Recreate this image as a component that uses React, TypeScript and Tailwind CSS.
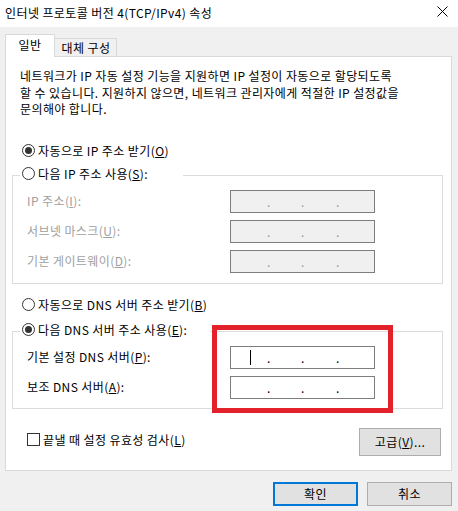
import type { ReactNode } from "react";

function Radio({ checked }: { checked?: boolean }) {
  return (
    <span className="flex h-[13px] w-[13px] shrink-0 items-center justify-center rounded-full border border-[#333] bg-white">
      {checked && <span className="h-[7px] w-[7px] rounded-full bg-[#333]" />}
    </span>
  );
}

function IpBox({ disabled, cursor }: { disabled?: boolean; cursor?: boolean }) {
  const dot = (
    <span className={`w-[3px] text-center leading-[21px] tracking-normal ${disabled ? "text-[#9a9a9a]" : "text-black"}`}>
      .
    </span>
  );
  return (
    <div
      className={`flex h-[23px] w-[145px] border border-[#7d7d7d] ${
        disabled ? "bg-[#f0f0f0]" : "bg-white"
      }`}
    >
      <span className="flex w-[36px] items-center">
        {cursor && <span className="ml-[19px] h-[15px] w-px bg-black" />}
      </span>
      {dot}
      <span className="w-[31px]" />
      {dot}
      <span className="w-[32px]" />
      {dot}
    </div>
  );
}

function FieldRow({
  label,
  disabled,
  cursor,
}: {
  label: ReactNode;
  disabled?: boolean;
  cursor?: boolean;
}) {
  return (
    <div className="flex h-[23px] items-center pl-[14px]">
      <span className={`w-[203px] ${disabled ? "text-[#a0a0a0]" : "text-black"}`}>{label}</span>
      <IpBox disabled={disabled} cursor={cursor} />
    </div>
  );
}

function Button({ children, primary, className = "" }: { children: ReactNode; primary?: boolean; className?: string }) {
  return (
    <div
      className={`flex items-center justify-center bg-[#e1e1e1] ${
        primary ? "border-2 border-[#0078d7]" : "border border-[#adadad]"
      } ${className}`}
    >
      {children}
    </div>
  );
}

export default function App() {
  return (
    <div className="relative h-[511px] w-[458px] overflow-hidden bg-[#f0f0f0] font-['Noto_Sans_CJK_KR',sans-serif] text-[12px] tracking-[0.4px] text-black">
      {/* title bar */}
      <div className="flex h-[27px] items-center justify-between bg-white pl-[5px] pr-[10px]">
        <span className="-mt-[2px]">인터넷 프로토콜 버전 4(TCP/IPv4) 속성</span>
        <svg width="11" height="11" viewBox="0 0 11 11" className="-mt-[4px]">
          <path d="M0.5 0.5 L10.5 10.5 M10.5 0.5 L0.5 10.5" stroke="#000" strokeWidth="1" />
        </svg>
      </div>

      {/* tabs */}
      <div className="mt-[7px] flex items-start pl-[5px]">
        <div className="relative z-10 -mb-px flex h-[23px] w-[50px] justify-center border-x border-t border-[#d9d9d9] bg-white pt-[1px]">
          일반
        </div>
        <div className="mt-[4px] flex h-[18px] w-[62px] items-center justify-center border-r border-t border-[#d9d9d9] pl-[1px]">
          대체 구성
        </div>
      </div>

      {/* panel */}
      <div className="relative ml-[5px] w-[447px] border border-[#d9d9d9] bg-white pb-[14px]">
        <p className="whitespace-nowrap pl-[14px] pt-[11px] leading-[16.5px]">
          네트워크가 IP 자동 설정 기능을 지원하면 IP 설정이 자동으로 할당되도록
          <br />할 수 있습니다. 지원하지 않으면, 네트워크 관리자에게 적절한 IP 설정값을
          <br />문의해야 합니다.
        </p>

        <div className="ml-[16px] mt-[23px] flex h-[20px] items-center gap-[3px]">
          <Radio checked />
          <span>
            자동으로 IP 주소 받기(<u>O</u>)
          </span>
        </div>

        <div className="ml-[6px] mt-[14px] w-[431px] border border-[#dcdcdc] pb-[10px]">
          <div className="-mt-[12px] ml-[7px] flex h-[20px] w-[163px] items-center gap-[3px] bg-white pl-[2px]">
            <Radio />
            <span>
              다음 IP 주소 사용(<u>S</u>):
            </span>
          </div>
          <div className="mt-[6px] flex flex-col gap-[7px]">
            <FieldRow
              disabled
              label={
                <>
                  IP 주소(<u>I</u>):
                </>
              }
            />
            <FieldRow
              disabled
              label={
                <>
                  서브넷 마스크(<u>U</u>):
                </>
              }
            />
            <FieldRow
              disabled
              label={
                <>
                  기본 게이트웨이(<u>D</u>):
                </>
              }
            />
          </div>
        </div>

        <div className="ml-[16px] mt-[11px] flex h-[20px] items-center gap-[3px]">
          <Radio />
          <span>
            자동으로 DNS 서버 주소 받기(<u>B</u>)
          </span>
        </div>

        <div className="ml-[6px] mt-[16px] w-[431px] border border-[#dcdcdc] pb-[9px]">
          <div className="-mt-[12px] ml-[7px] flex h-[20px] w-[190px] items-center gap-[3px] bg-white pl-[2px]">
            <Radio checked />
            <span>
              다음 DNS 서버 주소 사용(<u>E</u>):
            </span>
          </div>
          <div className="mt-[6px] flex flex-col gap-[7px]">
            <FieldRow
              cursor
              label={
                <>
                  기본 설정 DNS 서버(<u>P</u>):
                </>
              }
            />
            <FieldRow
              label={
                <>
                  보조 DNS 서버(<u>A</u>):
                </>
              }
            />
          </div>
        </div>

        <div className="mt-[19px] flex items-start justify-between pl-[21px] pr-[10px]">
          <div className="mt-[3px] flex items-center gap-[3px]">
            <span className="h-[13px] w-[13px] border border-[#333] bg-white" />
            <span>
              끝낼 때 설정 유효성 검사(<u>L</u>)
            </span>
          </div>
          <Button className="h-[28px] w-[82px]">
            고급(<u>V</u>)...
          </Button>
        </div>

        {/* annotation overlay */}
        <div className="absolute left-[206px] top-[268px] h-[88px] w-[181px] border-[5px] border-[#e3212b]" />
      </div>

      {/* bottom buttons */}
      <div className="mt-[11px] flex justify-end gap-[9px] pr-[6px]">
        <Button primary className="h-[24px] w-[85px]">
          확인
        </Button>
        <Button className="h-[24px] w-[85px]">취소</Button>
      </div>
    </div>
  );
}
